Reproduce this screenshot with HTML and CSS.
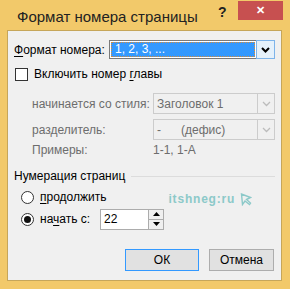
FILE: index.html
```html
<!DOCTYPE html>
<html>
<head>
<meta charset="UTF-8">
<link rel="stylesheet" href="styles.css">
</head>
<body>
<div class="window">
	<div class="titlebar">
		<span class="title">Формат номера страницы</span>
		<span class="help">?</span>
		<span class="close">&#x2715;</span>
	</div>
	<div class="client">
		<div class="row fmt">
			<span class="lbl-fmt"><u>Ф</u>ормат номера:</span>
			<div class="combo active">
				<span class="combo-val"><span class="sel">1, 2, 3, ...</span></span>
				<span class="combo-btn">
					<svg width="9" height="6" viewBox="0 0 9 6"><path d="M1 1 L4.5 4.5 L8 1" fill="none" stroke="#000" stroke-width="2"/></svg>
				</span>
			</div>
		</div>
		<div class="row chk">
			<span class="box"></span>
			<span>Включить номер <u>г</u>лавы</span>
		</div>
		<div class="row sub first">
			<span class="lbl-sub">начинается со стиля:</span>
			<div class="combo disabled">
				<span class="combo-val">Заголовок 1</span>
				<span class="combo-btn">
					<svg width="9" height="6" viewBox="0 0 9 6"><path d="M1 1 L4.5 4.5 L8 1" fill="none" stroke="#bcbcbc" stroke-width="1.3"/></svg>
				</span>
			</div>
		</div>
		<div class="row sub second">
			<span class="lbl-sub">разделитель:</span>
			<div class="combo disabled">
				<span class="combo-val">-&nbsp;&nbsp;&nbsp;&nbsp;&nbsp;&nbsp;(дефис)</span>
				<span class="combo-btn">
					<svg width="9" height="6" viewBox="0 0 9 6"><path d="M1 1 L4.5 4.5 L8 1" fill="none" stroke="#bcbcbc" stroke-width="1.3"/></svg>
				</span>
			</div>
		</div>
		<div class="row sub ex">
			<span class="lbl-sub">Примеры:</span>
			<span>1-1, 1-A</span>
		</div>
		<div class="group">
			<span>Нумерация страниц</span>
			<span class="line"></span>
		</div>
		<div class="row radio-row">
			<span class="radio"></span>
			<span><u>п</u>родолжить</span>
			<span class="mark">
				<span>itshneg:ru</span>
				<svg width="12" height="13" viewBox="0 0 12 13"><path d="M1.5 1 L2.5 11.5 L5 8 L9.5 11.5 L10.5 10 L6.5 6.5 L10.5 4.5 Z" fill="none" stroke="#8cc9c9" stroke-width="1.4"/></svg>
			</span>
		</div>
		<div class="row radio-row">
			<span class="radio on"></span>
			<span class="lbl-start">на<u>ч</u>ать с:</span>
			<div class="spin">
				<span class="spin-val">22</span>
				<span class="spin-btns">
					<span class="spin-b"><svg width="7" height="4" viewBox="0 0 7 4"><path d="M0 4 L3.5 0 L7 4 Z" fill="#000"/></svg></span>
					<span class="spin-b"><svg width="7" height="4" viewBox="0 0 7 4"><path d="M0 0 L3.5 4 L7 0 Z" fill="#000"/></svg></span>
				</span>
			</div>
		</div>
		<div class="buttons">
			<span class="btn default">ОК</span>
			<span class="btn">Отмена</span>
		</div>
	</div>
</div>
</body>
</html>
```
FILE: styles.css
```css
html, body {
	margin: 0;
	padding: 0;
	width: 290px;
	height: 289px;
	overflow: hidden;
}
.window {
	width: 290px;
	height: 289px;
	box-sizing: border-box;
	background: #f2c96a;
	padding: 0 8px 8px 7px;
	display: flex;
	flex-direction: column;
	font-family: "Liberation Sans", Arial, sans-serif;
	font-size: 12px;
	color: #000;
	white-space: nowrap;
}
.titlebar {
	height: 30px;
	display: flex;
	position: relative;
}
.title {
	font-size: 15px;
	color: #222;
	padding: 8px 0 0 10px;
}
.help {
	position: absolute;
	left: 211px;
	top: 4px;
	font-weight: bold;
	font-size: 14px;
	color: #222;
}
.close {
	position: absolute;
	left: 231px;
	top: 1px;
	width: 45px;
	height: 19px;
	background: #c75050;
	color: #fff;
	font-size: 11px;
	font-weight: bold;
	display: flex;
	align-items: center;
	justify-content: center;
}
.client {
	flex: 1;
	background: #f0f0f0;
	border: 1px solid #c6a65a;
	padding: 9px 6px 0 6px;
	display: flex;
	flex-direction: column;
}
u {
	text-decoration: underline;
	text-underline-offset: 2px;
}
.row {
	display: flex;
	align-items: center;
}
.fmt {
	height: 19px;
}
.lbl-fmt {
	width: 95px;
}
.combo {
	display: flex;
	height: 19px;
	box-sizing: border-box;
	flex: 1;
}
.combo-val {
	flex: 1;
	display: flex;
	align-items: center;
}
.combo.active {
	border: 1px solid #7a7a7a;
	background: #fff;
}
.combo.active .combo-val {
	padding: 1px;
}
.sel {
	flex: 1;
	height: 15px;
	background: #3399ff;
	color: #fff;
	border: 1px dotted #d98c3a;
	box-sizing: border-box;
	padding-left: 3px;
	line-height: 13px;
}
.combo-btn {
	width: 17px;
	display: flex;
	align-items: center;
	justify-content: center;
}
.combo.active .combo-btn {
	background: #e5f1fb;
	border: 1px solid #7eb4ea;
	margin: -1px -1px -1px 0;
}
.chk {
	margin-top: 8px;
	height: 14px;
	gap: 6px;
}
.box {
	width: 11px;
	height: 11px;
	border: 1px solid #333;
	background: #fff;
	margin-left: 1px;
}
.sub {
	padding-left: 18px;
	color: #6d6d6d;
}
.lbl-sub {
	width: 121px;
}
.sub .combo {
	height: 21px;
	border: 1px solid #cccccc;
	padding-left: 3px;
}
.sub .combo .combo-btn {
	border-left: 1px solid #cccccc;
	width: 16px;
}
.sub.first {
	margin-top: 12px;
}
.sub.second {
	margin-top: 5px;
}
.ex {
	margin-top: 1px;
	height: 18px;
}
.group {
	display: flex;
	align-items: center;
	margin-top: 10px;
	gap: 6px;
}
.line {
	flex: 1;
	height: 1px;
	background: #dcdcdc;
}
.radio-row {
	padding-left: 7px;
	gap: 6px;
	height: 20px;
}
.group + .radio-row {
	margin-top: 4px;
}
.radio-row + .radio-row {
	margin-top: 2px;
}
.radio {
	width: 11px;
	height: 11px;
	border: 1px solid #333;
	border-radius: 50%;
	background: #fff;
	display: flex;
	align-items: center;
	justify-content: center;
}
.radio.on::after {
	content: "";
	width: 7px;
	height: 7px;
	border-radius: 50%;
	background: #111;
}
.mark {
	margin-left: 56px;
	color: #8cc9c9;
	font-weight: bold;
	font-size: 12px;
	letter-spacing: 0.8px;
	display: flex;
	align-items: center;
	gap: 5px;
	margin-top: 4px;
}
.lbl-start {
	width: 54px;
}
.spin {
	display: flex;
	width: 64px;
	height: 21px;
	box-sizing: border-box;
	border: 1px solid #acacac;
	background: #fff;
}
.spin-val {
	flex: 1;
	padding-left: 3px;
	display: flex;
	align-items: center;
}
.spin-btns {
	width: 14px;
	display: flex;
	flex-direction: column;
	border-left: 1px solid #acacac;
}
.spin-b {
	flex: 1;
	display: flex;
	align-items: center;
	justify-content: center;
	background: #f0f0f0;
}
.spin-b + .spin-b {
	border-top: 1px solid #acacac;
}
.buttons {
	display: flex;
	justify-content: flex-end;
	gap: 10px;
	margin-top: 20px;
	padding-right: 1px;
}
.btn {
	width: 73px;
	height: 22px;
	box-sizing: border-box;
	border: 1px solid #adadad;
	background: #e1e1e1;
	display: flex;
	align-items: center;
	justify-content: center;
}
.btn.default {
	border-color: #3399ff;
	width: 74px;
}
.btn + .btn {
	width: 65px;
}
```
